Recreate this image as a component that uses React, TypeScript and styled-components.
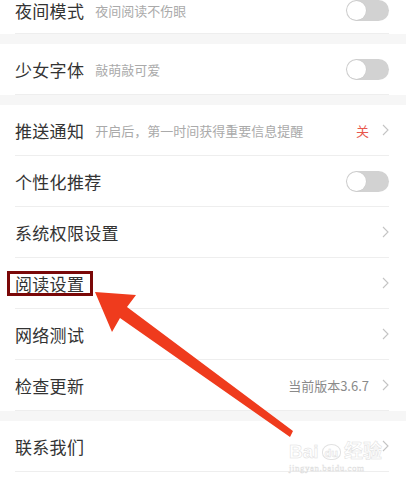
import React from 'react';
import styled, { createGlobalStyle } from 'styled-components';

const GlobalStyle = createGlobalStyle`
	html, body {
		margin: 0;
		padding: 0;
		background: #ffffff;
		overflow: hidden;
	}
	body {
		font-family: 'Noto Sans CJK SC', 'Noto Sans', sans-serif;
	}
`;

type RowData = {
	title: string;
	desc?: string;
	kind: 'toggle' | 'arrow';
	value?: string;
	valueColor?: string;
};

const sections: RowData[][] = [
	[{ title: '夜间模式', desc: '夜间阅读不伤眼', kind: 'toggle' }],
	[{ title: '少女字体', desc: '敲萌敲可爱', kind: 'toggle' }],
	[
		{ title: '推送通知', desc: '开启后，第一时间获得重要信息提醒', kind: 'arrow', value: '关', valueColor: '#e8574c' },
		{ title: '个性化推荐', kind: 'toggle' },
		{ title: '系统权限设置', kind: 'arrow' },
		{ title: '阅读设置', kind: 'arrow' },
		{ title: '网络测试', kind: 'arrow' },
		{ title: '检查更新', kind: 'arrow', value: '当前版本3.6.7', valueColor: '#8a8a8a' },
	],
	[{ title: '联系我们', kind: 'arrow' }],
];

const Chevron = () => (
	<svg width="7" height="12" viewBox="0 0 7 12">
		<polyline points="1,1 6,6 1,11" fill="none" stroke="#c4c4c4" strokeWidth="1.1" />
	</svg>
);

export default function App() {
	return (
		<Screen>
			<GlobalStyle />
			<List>
				{sections.map((rows, si) => (
					<Section key={si}>
						{rows.map((row) => (
							<Row key={row.title}>
								<Title>{row.title}</Title>
								{row.desc && <Desc>{row.desc}</Desc>}
								<Right>
									{row.value && <Value $color={row.valueColor}>{row.value}</Value>}
									{row.kind === 'toggle' ? (
										<Switch>
											<Knob />
										</Switch>
									) : (
										<Chevron />
									)}
								</Right>
							</Row>
						))}
					</Section>
				))}
			</List>
			<Highlight />
			<Arrow width="406" height="487" viewBox="0 0 406 487">
				<polygon points="95,292 136,295 127,307 293,431 290,437 120,318 112,332" fill="#ef3b1d" />
			</Arrow>
			<Watermark>
				<Brand>
					Bai<Paw>du</Paw>经验
				</Brand>
				<Url>jingyan.baidu.com</Url>
			</Watermark>
		</Screen>
	);
}

const Screen = styled.div`
	position: relative;
	width: 406px;
	height: 487px;
	overflow: hidden;
	background: #fff;
`;

const List = styled.div`
	display: flex;
	flex-direction: column;
	gap: 10px;
	margin-top: -13px;
	background: #f6f6f6;
`;

const Row = styled.div`
	position: relative;
	display: flex;
	align-items: center;
	height: 50px;
	margin: 0 17px 0 15px;
	border-bottom: 1px solid #eeeeee;
`;

const Section = styled.div`
	background: #fff;

	&:first-child ${Row} {
		height: 46px;
	}
`;

const Title = styled.span`
	font-size: 17px;
	color: #333;
	letter-spacing: 0.3px;
`;

const Desc = styled.span`
	margin-left: 11px;
	font-size: 13px;
	color: #aaaaaa;
`;

const Right = styled.div`
	margin-left: auto;
	display: flex;
	align-items: center;
	gap: 13px;
`;

const Value = styled.span<{ $color?: string }>`
	font-size: 13px;
	color: ${(p) => p.$color};
`;

const Switch = styled.div`
	width: 43px;
	height: 21px;
	border-radius: 11px;
	background: #d2d2d2;
	display: flex;
	align-items: center;
	padding-left: 1px;
	box-sizing: border-box;
`;

const Knob = styled.div`
	width: 19px;
	height: 19px;
	border-radius: 50%;
	background: #fff;
	box-shadow: 0 0 0 0.5px #c8c8c8;
`;

const Highlight = styled.div`
	position: absolute;
	left: 7px;
	top: 271px;
	width: 86px;
	height: 25px;
	border: 3px solid #7a0808;
	box-sizing: border-box;
`;

const Arrow = styled.svg`
	position: absolute;
	left: 0;
	top: 0;
	pointer-events: none;
`;

const Watermark = styled.div`
	position: absolute;
	left: 289px;
	top: 441px;
	display: flex;
	flex-direction: column;
	align-items: flex-start;
	color: rgba(255, 255, 255, 0.9);
	font-family: 'Liberation Sans', 'Noto Sans CJK SC', sans-serif;
	-webkit-text-stroke: 0.5px #dedede;
`;

const Brand = styled.div`
	font-size: 19px;
	font-weight: bold;
	line-height: 22px;
	display: flex;
	align-items: center;
`;

const Paw = styled.span`
	font-size: 11px;
	margin: 0 3px;
	padding: 2px 2px 0;
	border: 1px solid #e2e2e2;
	border-radius: 50% 50% 45% 45%;
	line-height: 12px;
	-webkit-text-stroke: 0.5px #dedede;
`;

const Url = styled.div`
	font-size: 9px;
	line-height: 10px;
	letter-spacing: 0.5px;
	font-family: 'Liberation Serif', serif;
	-webkit-text-stroke: 0.4px #dadada;
`;
